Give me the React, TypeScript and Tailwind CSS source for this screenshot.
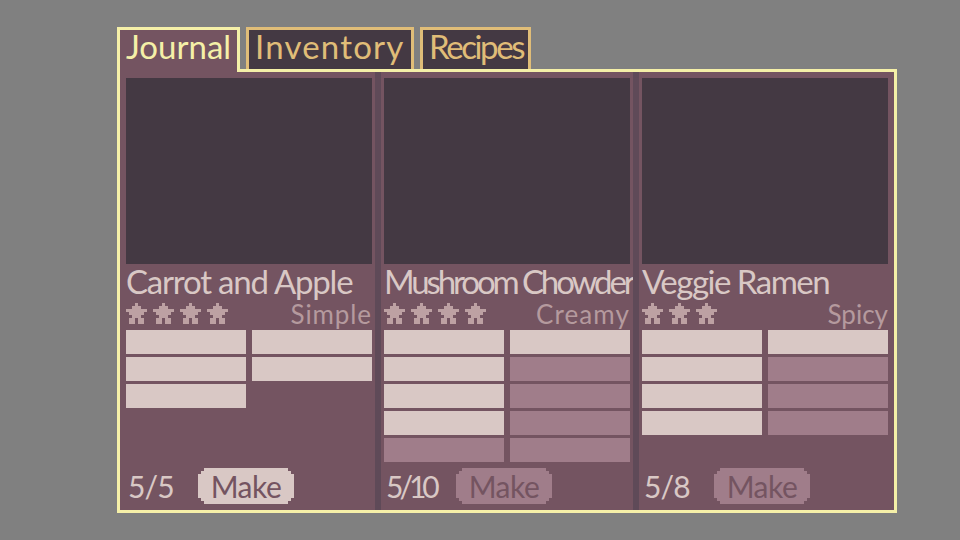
import React from "react";

const recipes = [
  {
    title: "Carrot and Apple",
    titleClass: "tracking-[-1.2px]",
    tag: "Simple",
    tagClass: "tracking-[0.9px]",
    stars: 4,
    rows: [["on", "on"], ["on", "on"], ["on", "none"]],
    count: "5/5",
    countClass: "tracking-[-0.9px]",
    ready: true,
  },
  {
    title: "Mushroom Chowder",
    titleClass: "tracking-[-3.1px]",
    tag: "Creamy",
    tagClass: "tracking-[1.1px]",
    stars: 4,
    rows: [["on", "on"], ["on", "off"], ["on", "off"], ["on", "off"], ["off", "off"]],
    count: "5/10",
    countClass: "tracking-[-4px]",
    ready: false,
  },
  {
    title: "Veggie Ramen",
    titleClass: "tracking-[-1.5px]",
    tag: "Spicy",
    tagClass: "tracking-[0px]",
    stars: 3,
    rows: [["on", "on"], ["on", "off"], ["on", "off"], ["on", "off"]],
    count: "5/8",
    countClass: "tracking-[-0.9px]",
    ready: false,
  },
];

const Star = () => (
  <svg width="21" height="21" viewBox="0 0 7 7" shapeRendering="crispEdges" className="fill-[#bda1a3]">
    <path d="M3 0h1v1h1v1h2v1h-1v1h-1v1h1v2h-2v-2h-1v2h-2v-2h1v-1h-1v-1h-1v-1h2v-1h1z" />
  </svg>
);

function RecipeColumn({ recipe }: { recipe: (typeof recipes)[number] }) {
  return (
    <div className="flex w-[246px] flex-col pt-[6px]">
      {/* Picture slot */}
      <div className="h-[186px] bg-[#443943]" />

      <h2 className={`h-[39px] whitespace-nowrap text-[33px] font-normal leading-[34px] text-[#d9c8c5] ${recipe.titleClass}`}>
        {recipe.title}
      </h2>

      <div className="flex h-[27px] items-start justify-between">
        <div className="flex gap-[6px]">
          {Array.from({ length: recipe.stars }).map((_, i) => (
            <Star key={i} />
          ))}
        </div>
        <span className={`text-[26px] leading-[23px] text-[#b59a9e] ${recipe.tagClass}`}>{recipe.tag}</span>
      </div>

      {/* Ingredient slots */}
      <div className="grid grid-cols-2 gap-x-[6px] gap-y-[3px]">
        {recipe.rows.flat().map((slot, i) => (
          <div
            key={i}
            className={`h-[24px] ${slot === "on" ? "bg-[#d9c8c5]" : slot === "off" ? "bg-[#a07d8a]" : ""}`}
          />
        ))}
      </div>

      <div className="mt-auto flex items-center pb-[6px] pl-[2px]">
        <span className={`w-[70px] text-[30px] leading-[36px] text-[#d9c8c5] ${recipe.countClass}`}>{recipe.count}</span>
        <button
          className={`h-[36px] w-[96px] text-center text-[30px] leading-[36px] tracking-[-0.5px] text-[#745461] [clip-path:polygon(6px_0,90px_0,90px_3px,93px_3px,93px_6px,96px_6px,96px_30px,93px_30px,93px_33px,90px_33px,90px_36px,6px_36px,6px_33px,3px_33px,3px_30px,0_30px,0_6px,3px_6px,3px_3px,6px_3px)] ${
            recipe.ready ? "bg-[#d9c8c5]" : "bg-[#a07d8a]"
          }`}
        >
          Make
        </button>
      </div>
    </div>
  );
}

export default function App() {
  return (
    <div className="h-[540px] w-[960px] overflow-hidden bg-[#808080] pl-[117px] pt-[27px] font-['Lato',sans-serif]">
      {/* Tabs */}
      <div className="flex items-start gap-[6px] text-[33px] leading-[32px]">
        <div className="relative z-10 -mb-[3px] h-[45px] w-[123px] border-[3px] border-b-0 border-[#f5f0a8] bg-[#745461] pl-[6px] text-[#f5f0a8]">
          Journal
        </div>
        <div className="h-[42px] w-[168px] border-[3px] border-b-0 border-[#e0bd78] bg-[#443943] pl-[6px] tracking-[1.2px] text-[#e0bd78]">
          Inventory
        </div>
        <div className="h-[42px] w-[111px] border-[3px] border-b-0 border-[#e0bd78] bg-[#443943] pl-[6px] tracking-[-2.4px] text-[#e0bd78]">
          Recipes
        </div>
      </div>

      {/* Journal panel */}
      <div className="flex h-[444px] w-[780px] border-[3px] border-[#f5f0a8] bg-[#745461] px-[6px]">
        {recipes.map((recipe, i) => (
          <React.Fragment key={recipe.title}>
            {i > 0 && <div className="mx-[3px] w-[6px] bg-[#5f4a58]" />}
            <RecipeColumn recipe={recipe} />
          </React.Fragment>
        ))}
      </div>
    </div>
  );
}
